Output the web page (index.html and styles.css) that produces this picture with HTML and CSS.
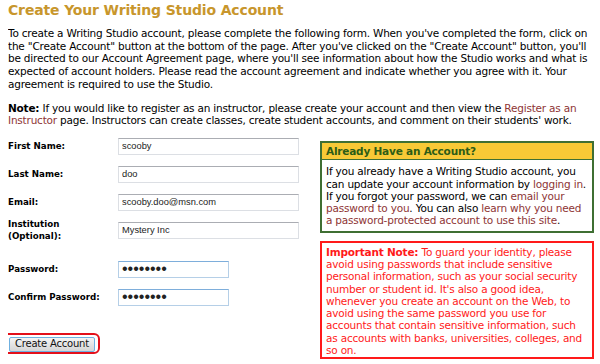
FILE: index.html
```html
<!DOCTYPE html>
<html lang="en">
<head>
    <meta charset="UTF-8">
    <title>Create Your Writing Studio Account</title>
    <link rel="stylesheet" href="styles.css">
</head>
<body>
    <h1 class="title">Create Your Writing Studio Account</h1>

    <p>To create a Writing Studio account, please complete the following form. When you've completed the form, click on the "Create Account" button at the bottom of the page. After you've clicked on the "Create Account" button, you'll be directed to our Account Agreement page, where you'll see information about how the Studio works and what is expected of account holders. Please read the account agreement and indicate whether you agree with it. Your agreement is required to use the Studio.</p>

    <p><strong>Note:</strong> If you would like to register as an instructor, please create your account and then view the <a href="#">Register as an Instructor</a> page. Instructors can create classes, create student accounts, and comment on their students' work.</p>

    <div class="layout">
        <form class="signup">
            <div class="row">
                <label for="first">First Name:</label>
                <input type="text" id="first" class="field" value="scooby">
            </div>
            <div class="row">
                <label for="last">Last Name:</label>
                <input type="text" id="last" class="field" value="doo">
            </div>
            <div class="row">
                <label for="email">Email:</label>
                <input type="text" id="email" class="field" value="scooby.doo@msn.com">
            </div>
            <div class="row row-tall">
                <label for="inst">Institution<br>(Optional):</label>
                <input type="text" id="inst" class="field" value="Mystery Inc">
            </div>
            <div class="row">
                <label for="pw">Password:</label>
                <input type="password" id="pw" class="field field-short field-active" value="scoobyd1">
            </div>
            <div class="row">
                <label for="pw2">Confirm Password:</label>
                <input type="password" id="pw2" class="field field-short field-active" value="scoobyd1">
            </div>

            <div class="submit-wrap">
                <span class="highlight">
                    <button type="button" class="submit">Create Account</button>
                </span>
            </div>
        </form>

        <div class="side">
            <div class="box box-green">
                <div class="box-head">Already Have an Account?</div>
                <div class="box-body">
                    If you already have a Writing Studio account, you can update your account information by <a href="#">logging in</a>. If you forgot your password, we can <a href="#">email your password to you</a>. You can also <a href="#">learn why you need a password-protected account to use this site</a>.
                </div>
            </div>

            <div class="box box-red">
                <strong>Important Note:</strong> To guard your identity, please avoid using passwords that include sensitive personal information, such as your social security number or student id. It's also a good idea, whenever you create an account on the Web, to avoid using the same password you use for accounts that contain sensitive information, such as accounts with banks, universities, colleges, and so on.
            </div>
        </div>
    </div>
</body>
</html>
```

FILE: styles.css
```css
body {
    font-family: "DejaVu Sans", Verdana, sans-serif;
    font-size: 10.5px;
    line-height: 12.7px;
    letter-spacing: -0.2px;
    color: #000;
    margin: 0 2px 0 8px;
    background: #fff;
}
.title {
    font-size: 14px;
    line-height: 20px;
    letter-spacing: -0.15px;
    color: #c8962c;
    margin: 0 0 7px 0;
}
p {
    margin: 0 0 11px 0;
}
a {
    color: #8e3535;
    text-decoration: none;
}
.layout {
    display: grid;
    grid-template-columns: 312px 274px;
}
.row {
    display: flex;
    align-items: center;
    height: 17px;
    margin-bottom: 11px;
}
.row-tall {
    margin-bottom: 22px;
}
.row label {
    flex: 0 0 110px;
    font-weight: bold;
    font-size: 8.7px;
    line-height: 12.7px;
    letter-spacing: 0;
}
.field {
    box-sizing: border-box;
    height: 17px;
    width: 181px;
    margin: 0;
    padding: 0 3px;
    border: 1px solid #dcdfe4;
    border-top-color: #abadb3;
    font-family: "Liberation Sans", Arial, sans-serif;
    font-size: 9.3px;
    letter-spacing: 0;
    color: #222;
}
.field-short {
    width: 111px;
    font-size: 16px;
}
.field-active {
    border-color: #b5cfe7;
    border-top-color: #7eaedb;
}
.submit-wrap {
    margin-top: 27px;
    margin-left: -6px;
}
.highlight {
    display: inline-block;
    padding: 2px 3px 0 5px;
    border: 2px solid #e3101a;
    border-radius: 6px;
}
.submit {
    display: block;
    height: 15px;
    width: 86px;
    padding: 0;
    font-family: "DejaVu Sans", Verdana, sans-serif;
    font-size: 10px;
    letter-spacing: -0.2px;
    line-height: 12px;
    color: #111;
    border: 1px solid #6fb0e0;
    border-radius: 2px;
    background: linear-gradient(#f5f5f5, #e4e4e4 50%, #d6d6d6);
}
.side {
    display: flex;
    flex-direction: column;
    gap: 8px;
    padding-top: 3px;
}
.box {
    border: 2px solid;
    line-height: 12.3px;
}
.box-green {
    border-color: #3f6f33;
}
.box-head {
    background: #f8c936;
    color: #2c5c17;
    font-weight: bold;
    padding: 2px 4px;
    border-bottom: 1px solid #3f6f33;
}
.box-body {
    padding: 5px 4px 4px;
}
.box-red {
    border-color: #ff1a1a;
    color: #ff1a1a;
    padding: 3px 4px 1px;
}
```
